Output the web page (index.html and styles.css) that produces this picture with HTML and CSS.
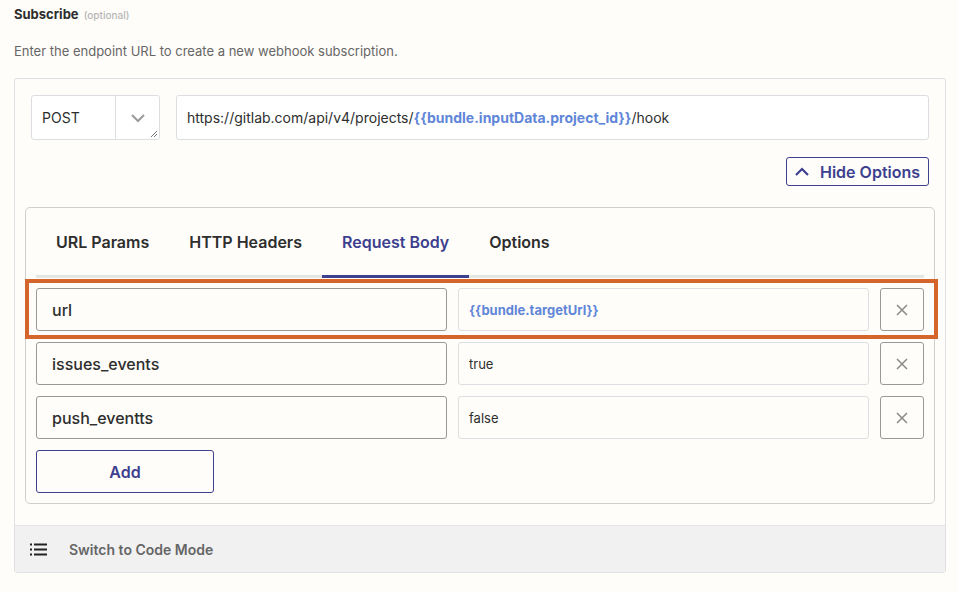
FILE: index.html
```html
<!DOCTYPE html>
<html>
<head>
<meta charset="utf-8">
<link rel="stylesheet" href="styles.css">
</head>
<body>
<div class="page">
  <div class="title">Subscribe <span class="optional">(optional)</span></div>
  <div class="desc">Enter the endpoint URL to create a new webhook subscription.</div>
  <div class="panel">
    <div class="top-row">
      <div class="select">
        <span class="select-value">POST</span>
        <span class="select-arrow">
          <svg width="16" height="10" viewBox="0 0 16 10"><path d="M2 2 L8 8 L14 2" fill="none" stroke="#9a9a9a" stroke-width="2"/></svg>
        </span>
        <svg class="grip" width="8" height="8" viewBox="0 0 8 8"><path d="M1 7 L7 1 M4 7 L7 4" stroke="#777" stroke-width="1"/></svg>
      </div>
      <div class="url-input">https://gitlab.com/api/v4/projects/<span class="var">{{bundle.inputData.project_id}}</span>/hook</div>
    </div>
    <div class="options-row">
      <button class="hide-btn">
        <svg width="16" height="10" viewBox="0 0 16 10"><path d="M2 8 L8 2 L14 8" fill="none" stroke="#3d3f8f" stroke-width="2.2"/></svg>
        Hide Options
      </button>
    </div>
    <div class="card">
      <div class="tabs">
        <div class="tab">URL Params</div>
        <div class="tab">HTTP Headers</div>
        <div class="tab active">Request Body</div>
        <div class="tab">Options</div>
      </div>
      <div class="rows">
        <div class="row highlighted">
          <div class="key">url</div>
          <div class="val"><span class="var small">{{bundle.targetUrl}}</span></div>
          <div class="del"><svg width="12" height="12" viewBox="0 0 12 12"><path d="M1 1 L11 11 M11 1 L1 11" stroke="#8a8a8a" stroke-width="1.5"/></svg></div>
          <div class="highlight"></div>
        </div>
        <div class="row">
          <div class="key">issues_events</div>
          <div class="val">true</div>
          <div class="del"><svg width="12" height="12" viewBox="0 0 12 12"><path d="M1 1 L11 11 M11 1 L1 11" stroke="#8a8a8a" stroke-width="1.5"/></svg></div>
        </div>
        <div class="row">
          <div class="key">push_eventts</div>
          <div class="val">false</div>
          <div class="del"><svg width="12" height="12" viewBox="0 0 12 12"><path d="M1 1 L11 11 M11 1 L1 11" stroke="#8a8a8a" stroke-width="1.5"/></svg></div>
        </div>
        <button class="add-btn">Add</button>
      </div>
    </div>
    <div class="footer">
      <svg width="17" height="13" viewBox="0 0 17 13">
        <rect x="0" y="0.5" width="2" height="2" fill="#222"/>
        <rect x="0" y="5.5" width="2" height="2" fill="#222"/>
        <rect x="0" y="10.5" width="2" height="2" fill="#222"/>
        <rect x="4" y="0.5" width="13" height="2" fill="#222"/>
        <rect x="4" y="5.5" width="13" height="2" fill="#222"/>
        <rect x="4" y="10.5" width="13" height="2" fill="#222"/>
      </svg>
      <span class="footer-text">Switch to Code Mode</span>
    </div>
  </div>
</div>
</body>
</html>
```

FILE: styles.css
```css
* { box-sizing: border-box; }
html, body { margin: 0; background: #fffdf9; }
body { font-family: Inter, "Noto Sans", sans-serif; color: #2d2e2e; }
.page { padding: 4px 12px 0 14px; }
.title { font-size: 13px; font-weight: 700; line-height: 20px; color: #2d2e2e; }
.optional { font-size: 10px; font-weight: 500; color: #b5b5b5; margin-left: 2px; }
.desc { margin-top: 16px; font-size: 13px; line-height: 20px; color: #666; }
.panel { margin-top: 17px; width: 932px; border: 1px solid #dfe1e5; border-radius: 3px; padding: 16px 10px 0; }
.top-row { display: flex; gap: 16px; margin: 0 6px; height: 45px; }
.select { position: relative; width: 129px; display: flex; border: 1px solid #dcdee2; border-radius: 3px; background: #fff; }
.select-value { flex: 1; padding-left: 10px; display: flex; align-items: center; font-size: 14px; color: #2d2e2e; border-right: 1px solid #dcdee2; }
.select-arrow { width: 43px; display: flex; align-items: center; justify-content: center; }
.grip { position: absolute; right: 1px; bottom: 1px; }
.url-input { flex: 1; border: 1px solid #dcdee2; border-radius: 3px; background: #fff; display: flex; align-items: center; padding-left: 10px; font-size: 14px; color: #2d2e2e; white-space: nowrap; }
.var { color: #5f86d8; font-weight: 700; }
.var.small { font-size: 13px; }
.options-row { display: flex; justify-content: flex-end; margin: 17px 6px 0; }
.hide-btn { height: 29px; width: 143px; border: 1px solid #3d3f8f; border-radius: 3px; background: transparent; color: #3d3f8f; font-family: Inter, sans-serif; font-size: 16px; font-weight: 600; display: flex; align-items: center; gap: 10px; padding: 0 0 0 7px; }
.card { margin-top: 21px; border: 1px solid #cfcfcf; border-radius: 5px; padding: 0 10px 10px; }
.tabs { display: flex; height: 70px; border-bottom: 3px solid #e6e6e3; }
.tab { padding: 0 20px; display: flex; align-items: center; font-size: 16px; font-weight: 600; color: #2d2e2e; margin-bottom: -3px; border-bottom: 3px solid transparent; }
.tab.active { color: #3d3f8f; border-bottom-color: #3d3f8f; }
.rows { padding-top: 10px; }
.row { position: relative; display: grid; grid-template-columns: 411px 411px 44px; gap: 11px; height: 43px; margin-bottom: 11px; }
.key { border: 1px solid #999; border-radius: 3px; background: #fffdf9; display: flex; align-items: center; padding-left: 15px; font-size: 16px; font-weight: 500; color: #2d2e2e; }
.val { border: 1px solid #dedfe2; border-radius: 3px; background: #fffdf9; display: flex; align-items: center; padding-left: 10px; font-size: 13px; color: #2d2e2e; }
.del { border: 1px solid #999; border-radius: 3px; display: flex; align-items: center; justify-content: center; }
.highlight { position: absolute; left: -11px; right: -14px; top: -9px; bottom: -8px; border: 4px solid #d4662b; pointer-events: none; }
.add-btn { display: block; width: 178px; height: 43px; border: 1px solid #3d3f8f; border-radius: 3px; background: transparent; color: #3d3f8f; font-family: Inter, sans-serif; font-size: 16px; font-weight: 600; }
.footer { margin: 21px -10px 0; height: 47px; background: #f1f1f2; border-top: 1px solid #e4e4e4; display: flex; align-items: center; padding-left: 15px; }
.footer-text { margin-left: 22px; font-size: 14px; font-weight: 600; color: #666; }
```
